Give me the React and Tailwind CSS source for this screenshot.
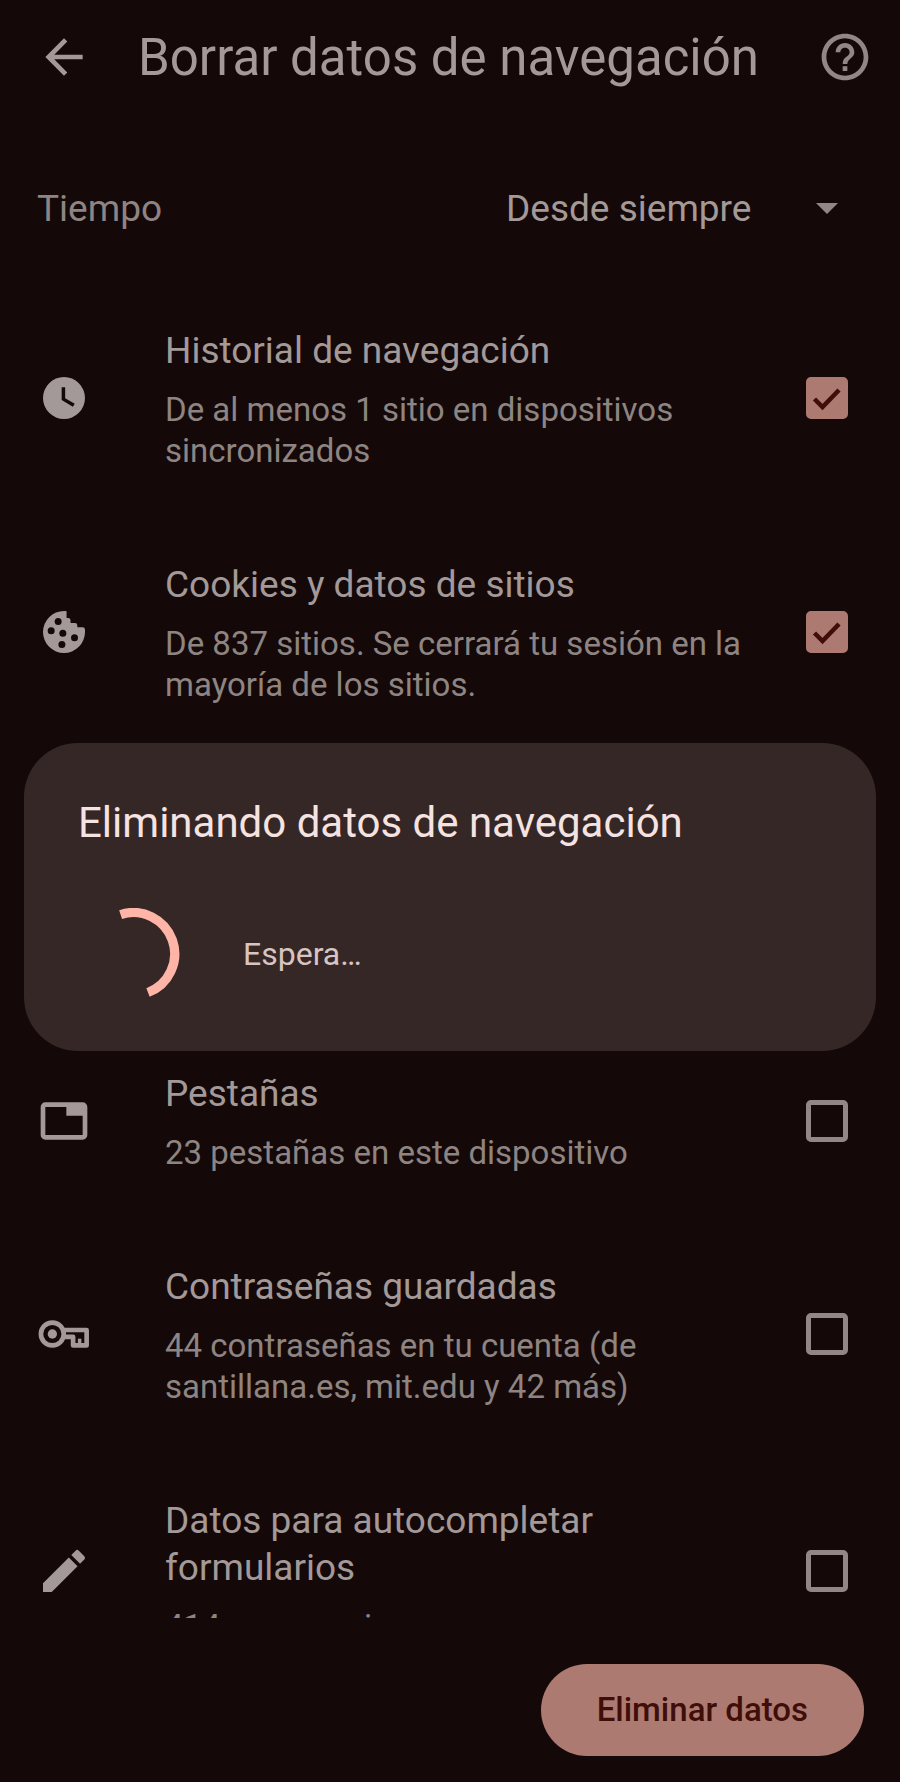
import { useState } from 'react';

const ClockIcon = () => (
  <svg viewBox="0 0 24 24" className="w-14 h-14 shrink-0" fill="currentColor" aria-hidden="true">
    <path fillRule="evenodd" d="M12 3a9 9 0 1 0 0 18 9 9 0 0 0 0-18zm-1 4.4h1.500v4.700l4.100 2.400-.8 1.300-4.800-2.900V7.400z"/>
  </svg>
);

const CookieIcon = () => (
  <svg viewBox="0 0 24 24" className="w-14 h-14 shrink-0" aria-hidden="true">
    <path fill="currentColor" d="M13.100 3.100V6h.7a1 1 0 0 1 1 1v1.100h1.900a1 1 0 0 1 1 1V10h2.300a1 1 0 0 1 1 .9V12a9 9 0 1 1-9-9c.4 0 .8 0 1.100.1z"/>
    <g fill="#140908">
      <circle cx="9.500" cy="7.500" r="1.500"/>
      <circle cx="6.500" cy="11.500" r="1.500"/>
      <circle cx="11.500" cy="12.500" r="1.500"/>
      <circle cx="16.500" cy="14.500" r="1.500"/>
      <circle cx="11.100" cy="17.400" r="1.500"/>
    </g>
  </svg>
);

const TabIcon = () => (
  <svg viewBox="0 0 24 24" className="w-14 h-14 shrink-0" fill="currentColor" aria-hidden="true">
    <path fillRule="evenodd" d="M4 4h16a2 2 0 0 1 2 2v12a2 2 0 0 1-2 2H4a2 2 0 0 1-2-2V6a2 2 0 0 1 2-2zm0 2v12h16V9.800h-7V6z"/>
  </svg>
);

const KeyIcon = () => (
  <svg viewBox="0 0 24 24" className="w-14 h-14 shrink-0" fill="none" stroke="currentColor" strokeWidth="2" strokeLinejoin="round" aria-hidden="true">
    <circle cx="7" cy="12" r="4.900"/>
    <circle cx="7" cy="12" r="2" fill="currentColor" stroke="none"/>
    <path d="M11.500 10.300h10.200v6.600h-5.800v-3.700h-4.200"/>
    <path d="M18.700 14v2.500" strokeWidth="1.500"/>
  </svg>
);

const PencilIcon = () => (
  <svg viewBox="0 0 24 24" className="w-14 h-14 shrink-0" fill="currentColor" aria-hidden="true">
    <path d="M3 17.250V21h3.750L17.810 9.940l-3.750-3.750L3 17.250zM20.710 7.040a1 1 0 0 0 0-1.410l-2.340-2.340a1 1 0 0 0-1.410 0l-1.830 1.830 3.750 3.750 1.830-1.830z"/>
  </svg>
);

const ITEMS = [
  { id: 'history', icon: ClockIcon, title: 'Historial de navegación', sub: 'De al menos 1 sitio en dispositivos sincronizados' },
  { id: 'cookies', icon: CookieIcon, title: 'Cookies y datos de sitios', sub: 'De 837 sitios. Se cerrará tu sesión en la mayoría de los sitios.' },
  { id: 'cache', icon: TabIcon, title: 'Archivos en caché', sub: 'Libera menos de 320 MB. Es posible que algunos sitios se carguen más lento la próxima vez que los visites.' },
  { id: 'tabs', icon: TabIcon, title: 'Pestañas', sub: '23 pestañas en este dispositivo' },
  { id: 'passwords', icon: KeyIcon, title: 'Contraseñas guardadas', sub: '44 contraseñas en tu cuenta (de santillana.es, mit.edu y 42 más)' },
  { id: 'autofill', icon: PencilIcon, title: 'Datos para autocompletar formularios', sub: '414 sugerencias' },
];

const DataRow = ({ item, checked, onToggle }) => {
  const Icon = item.icon;
  return (
    <li>
      <label htmlFor={item.id} className="flex items-center pl-9 pr-[52px] py-[42px]">
        <Icon/>
        <span className="flex-1 min-w-0 ml-[73px] mr-11 pt-1 pb-[2px]">
          <span className="block text-[37px] leading-[47px]">{item.title}</span>
          <span className="block mt-[15px] text-[33px] leading-[41px] text-[#8e8482]">{item.sub}</span>
        </span>
        <span className="relative w-[42px] h-[42px] shrink-0">
          <input
            id={item.id}
            type="checkbox"
            checked={checked}
            onChange={onToggle}
            className="block appearance-none w-[42px] h-[42px] rounded-[5px] border-[5px] border-[#938786] checked:border-[#ad7a72] checked:bg-[#ad7a72]"
          />
          {checked && (
            <svg viewBox="0 0 42 42" className="absolute inset-0 pointer-events-none" fill="none" stroke="#3f0e09" strokeWidth="4.500" aria-hidden="true">
              <path d="M8.500 22l8 8 16.500-17"/>
            </svg>
          )}
        </span>
      </label>
    </li>
  );
};

const ProgressDialog = () => (
  <div className="fixed inset-0 flex items-center px-6 pt-3">
    <div role="dialog" aria-labelledby="progress-title" className="w-full rounded-[54px] bg-[#352726] px-[54px] pt-14 pb-[51px]">
      <h2 id="progress-title" className="text-[42px] leading-[48px] text-[#f5e3e1]">Eliminando datos de navegación</h2>
      <div className="flex items-center gap-[55px] mt-[61px]">
        <svg viewBox="0 0 110 92" className="w-[110px] h-[92px]" fill="none" stroke="#ffb4a8" strokeWidth="9.300" aria-hidden="true">
          <path d="M42.600 6.600A41.300 41.300 0 0 1 70 84.500"/>
        </svg>
        <p className="text-[32px] leading-10 text-[#d8c4c1]">Espera…</p>
      </div>
    </div>
  </div>
);

export default function App() {
  const [range, setRange] = useState('all');
  const [selected, setSelected] = useState(['history', 'cookies', 'cache']);

  const toggle = (id) =>
    setSelected(prev => (prev.includes(id) ? prev.filter(x => x !== id) : [...prev, id]));

  return (
    <div className="h-screen flex flex-col bg-[#140908] text-[#a39998] font-['Roboto',sans-serif]">
      {/* Top bar */}
      <header className="flex items-center h-[114px] shrink-0 pl-9 pr-[27px]">
        <button type="button" aria-label="Atrás" className="shrink-0">
          <svg viewBox="0 0 24 24" className="w-14 h-14" fill="currentColor" aria-hidden="true">
            <path d="M20 11H7.830l5.590-5.590L12 4l-8 8 8 8 1.410-1.410L7.830 13H20v-2z"/>
          </svg>
        </button>
        <h1 className="flex-1 min-w-0 ml-[46px] pt-[2px] text-[51px] leading-[60px] whitespace-nowrap">Borrar datos de navegación</h1>
        <button type="button" aria-label="Ayuda" className="shrink-0 text-[#938786]">
          <svg viewBox="0 0 24 24" className="w-14 h-14" fill="currentColor" aria-hidden="true">
            <path d="M11 18h2v-2h-2v2zm1-16C6.480 2 2 6.480 2 12s4.480 10 10 10 10-4.480 10-10S17.520 2 12 2zm0 18c-4.410 0-8-3.590-8-8s3.590-8 8-8 8 3.590 8 8-3.590 8-8 8zm0-14c-2.210 0-4 1.790-4 4h2c0-1.100.9-2 2-2s2 .9 2 2c0 2-3 1.750-3 5h2c0-2.250 3-2.500 3-5 0-2.210-1.790-4-4-4z"/>
          </svg>
        </button>
      </header>

      <main className="flex-1 min-h-0 overflow-y-auto [scrollbar-width:none]">
        {/* Time range */}
        <div className="flex items-center justify-between pl-[37px] pr-9 pt-[71px] pb-12 text-[37px] leading-[48px]">
          <label htmlFor="range" className="text-[#8e8482]">Tiempo</label>
          <div className="relative">
            <select
              id="range"
              value={range}
              onChange={e => setRange(e.target.value)}
              className="block appearance-none w-[358px] h-12 bg-transparent leading-[48px]"
            >
              <option value="all">Desde siempre</option>
              <option value="hour">Última hora</option>
            </select>
            <svg viewBox="0 0 22 11" className="absolute right-[26px] top-[18px] w-[22px] h-[11px] pointer-events-none" fill="#938786" aria-hidden="true">
              <path d="M0 0h22L11 11z"/>
            </svg>
          </div>
        </div>

        <ul>
          {ITEMS.map(item => (
            <DataRow key={item.id} item={item} checked={selected.includes(item.id)} onToggle={() => toggle(item.id)}/>
          ))}
        </ul>
      </main>

      <footer className="flex justify-end shrink-0 pt-[46px] pb-[26px] px-9">
        <button type="button" className="h-[92px] px-14 rounded-full bg-[#ad7a72] text-[#3f0e09] text-[33px] font-medium">Eliminar datos</button>
      </footer>

      <ProgressDialog/>
    </div>
  );
}
